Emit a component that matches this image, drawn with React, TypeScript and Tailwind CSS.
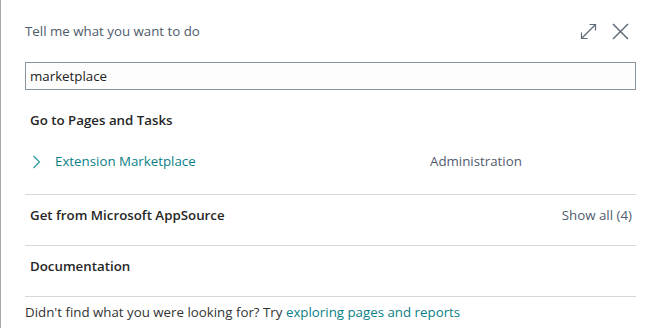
import React from 'react'

const FONT = { fontFamily: '"Open Sans", "Noto Sans", sans-serif' }

function ExpandIcon() {
  return (
    <svg width="17" height="17" viewBox="0 0 17 17" fill="none" stroke="#5f6b78" strokeWidth="1.2">
      <path d="M1.5 15.5 L15.5 1.5" />
      <path d="M9.5 1.5 H15.5 V7.5" />
      <path d="M1.5 9.5 V15.5 H7.5" />
    </svg>
  )
}

function CloseIcon() {
  return (
    <svg width="17" height="17" viewBox="0 0 17 17" fill="none" stroke="#5f6b78" strokeWidth="1.5">
      <path d="M1 1 L16 16" />
      <path d="M16 1 L1 16" />
    </svg>
  )
}

function Chevron() {
  return (
    <svg width="9" height="14" viewBox="0 0 9 14" fill="none" stroke="#2a9a9d" strokeWidth="1.2">
      <path d="M1.5 1 L7.5 7 L1.5 13" />
    </svg>
  )
}

export default function App() {
  return (
    <div
      className="w-[660px] h-[328px] bg-white border-l border-[#a8a8a8] pl-[24px] pr-[24px] text-[13.3px] text-[#212121] overflow-hidden"
      style={FONT}
    >
      {/* header */}
      <div className="flex items-center justify-between pt-[21px] h-[41px]">
        <span className="text-[#505c6d] leading-[20px]">Tell me what you want to do</span>
        <div className="flex items-center gap-[15px] pr-[7px]">
          <ExpandIcon />
          <CloseIcon />
        </div>
      </div>

      {/* search box */}
      <div className="mt-[21px] h-[28px] border border-[#8a949e] bg-[#fdfdfd] flex items-center px-[4px]">
        <span className="leading-[20px]">marketplace</span>
      </div>

      {/* pages and tasks */}
      <div className="border-b border-[#d8d8d8] pt-[21px] pb-[22px]">
        <div className="h-[20px] flex items-center px-[5px] font-semibold text-[#262626]">Go to Pages and Tasks</div>
        <div className="mt-[21px] h-[20px] flex items-center">
          <div className="ml-[7px] flex items-center">
            <Chevron />
          </div>
          <span className="ml-[14px] w-[375px] text-[#0a7f86]">Extension Marketplace</span>
          <span className="text-[#505c6d]">Administration</span>
        </div>
      </div>

      {/* appsource */}
      <div className="border-b border-[#d8d8d8] pt-[11px] pb-[19px]">
        <div className="h-[20px] flex items-center justify-between pl-[5px] pr-[4px]">
          <span className="font-semibold text-[#262626]">Get from Microsoft AppSource</span>
          <span className="text-[#505c6d]">Show all (4)</span>
        </div>
      </div>

      {/* documentation */}
      <div className="border-b border-[#d8d8d8] pt-[11px] pb-[19px]">
        <div className="h-[20px] flex items-center px-[5px] font-semibold text-[#262626]">Documentation</div>
      </div>

      {/* footer */}
      <div className="pt-[5px] h-[20px] leading-[20px] text-[#333]">
        Didn't find what you were looking for? Try{' '}
        <span className="text-[#0a7f86]">exploring pages and reports</span>
      </div>
    </div>
  )
}
